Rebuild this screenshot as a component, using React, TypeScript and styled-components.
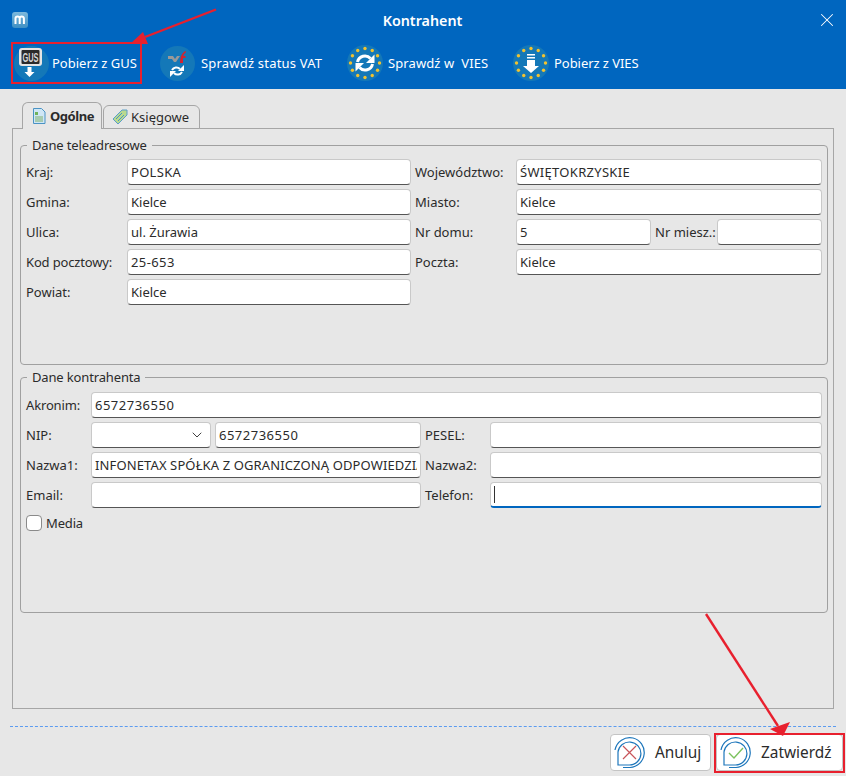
import React from 'react';
import styled, { createGlobalStyle } from 'styled-components';
import { ChevronDown, X } from 'lucide-react';

const GlobalStyle = createGlobalStyle`
  html, body {
    margin: 0;
    padding: 0;
    background: #e7e7e7;
  }
  * {
    box-sizing: border-box;
  }
`;

const Page = styled.div`
  position: relative;
  width: 846px;
  height: 776px;
  overflow: hidden;
  display: flex;
  flex-direction: column;
  background: #e7e7e7;
  color: #2b2b2b;
  font-family: "Noto Sans", "Open Sans", sans-serif;
  font-size: 13px;
`;

const Header = styled.header`
  height: 89px;
  flex: none;
  background: #0066bf;
  color: #fff;
`;

const TitleBar = styled.div`
  height: 40px;
  padding: 0 13px 0 12px;
  display: grid;
  grid-template-columns: 40px 1fr 40px;
  align-items: center;
`;

const Title = styled.div`
  text-align: center;
  font-weight: 600;
  font-size: 14.3px;
`;

const CloseWrap = styled.div`
  display: flex;
  justify-content: flex-end;
  margin-right: -5px;
`;

const Toolbar = styled.div`
  height: 49px;
  padding-left: 12px;
  display: flex;
  align-items: flex-start;
`;

const ToolItem = styled.div<{ $w: number; $after: number; $marked?: boolean; $iconGap: number }>`
  width: ${(p) => p.$w}px;
  height: 40px;
  margin: 3px ${(p) => p.$after}px 0 0;
  padding-left: 2px;
  display: flex;
  align-items: center;
  gap: ${(p) => p.$iconGap}px;
  white-space: nowrap;
  font-size: 13px;
  outline: ${(p) => (p.$marked ? '2px solid #e8202e' : 'none')};
  outline-offset: -1px;
`;

const ToolLabel = styled.span<{ $spacing?: number }>`
  letter-spacing: ${(p) => p.$spacing ?? 0}px;
`;

const Body = styled.main`
  flex: 1;
  display: flex;
  flex-direction: column;
  padding: 13px 12px 0;
`;

const TabRow = styled.div`
  display: flex;
  align-items: flex-start;
  padding-left: 10px;
  height: 27px;
  margin-bottom: -1px;
  gap: 1px;
`;

const Tab = styled.div<{ $active?: boolean }>`
  position: relative;
  z-index: 1;
  width: ${(p) => (p.$active ? 80 : 97)}px;
  height: ${(p) => (p.$active ? 27 : 24)}px;
  margin-top: ${(p) => (p.$active ? 0 : 3)}px;
  padding-left: ${(p) => (p.$active ? 9 : 8)}px;
  display: flex;
  align-items: center;
  gap: ${(p) => (p.$active ? 4 : 3)}px;
  background: #e7e7e7;
  border: 1px solid #a6a6a6;
  border-bottom: ${(p) => (p.$active ? 'none' : '1px solid #a6a6a6')};
  border-radius: 6px 6px 0 0;
  font-weight: ${(p) => (p.$active ? 700 : 400)};
  letter-spacing: ${(p) => (p.$active ? -0.45 : 0)}px;
`;

const Pane = styled.div`
  width: 822px;
  height: 581px;
  border: 1px solid #a6a6a6;
  padding: 8px 5px 0 7px;
  display: flex;
  flex-direction: column;
  gap: 4px;
`;

const Group = styled.fieldset<{ $h: number; $top: number }>`
  margin: 0;
  padding: ${(p) => p.$top}px 5px 0;
  min-width: 0;
  height: ${(p) => p.$h}px;
  border: 1px solid #a0a0a0;
  border-radius: 4px;
  display: flex;
  flex-direction: column;
  gap: 4px;
`;

const Legend = styled.legend`
  margin-left: 1px;
  padding: 0 5px;
  height: 16px;
  line-height: 16px;
  letter-spacing: -0.15px;
`;

const Row = styled.div`
  display: flex;
  align-items: center;
  gap: 4px;
  height: 26px;
`;

const Label = styled.label<{ $w: number }>`
  width: ${(p) => p.$w}px;
  flex: none;
  white-space: nowrap;
`;

const TightText = styled.span`
  letter-spacing: -0.15px;
`;

const fieldCss = `
  height: 26px;
  flex: none;
  background: #fff;
  border: 1px solid #c9c9c9;
  border-bottom: 1px solid #555;
  border-radius: 4px;
  padding: 0 3px;
  font: inherit;
  color: inherit;
  outline: none;
`;

const Field = styled.input<{ $w: number; $spacing?: number }>`
  ${fieldCss}
  width: ${(p) => p.$w}px;
  letter-spacing: ${(p) => p.$spacing ?? 0}px;
`;

const FocusedField = styled.div<{ $w: number }>`
  ${fieldCss}
  width: ${(p) => p.$w}px;
  border-bottom: 2px solid #0066bf;
  display: flex;
  align-items: center;
`;

const Caret = styled.span`
  width: 1px;
  height: 17px;
  background: #333;
`;

const Combo = styled.div<{ $w: number }>`
  ${fieldCss}
  width: ${(p) => p.$w}px;
  padding-right: 5px;
  display: flex;
  align-items: center;
  justify-content: flex-end;
`;

const CheckRow = styled.div`
  display: flex;
  align-items: center;
  gap: 4px;
  height: 26px;
  margin-top: -2px;
`;

const CheckBox = styled.span`
  width: 16px;
  height: 16px;
  background: #fff;
  border: 1px solid #8a8a8a;
  border-radius: 4px;
`;

const Footer = styled.footer`
  flex: 1;
  margin: 17px -2px 0;
  border-top: 1px dashed #5b9bf0;
  padding-top: 7px;
  display: flex;
  justify-content: flex-end;
  gap: 5px;
`;

const ButtonRow = styled.div`
  display: flex;
  gap: 5px;
  margin-right: -7px;
`;

const ActionButton = styled.div<{ $w: number; $marked?: boolean }>`
  position: relative;
  width: ${(p) => p.$w}px;
  height: 37px;
  background: #fff;
  border: 1px solid #c4c4c4;
  border-radius: 4px;
  display: flex;
  align-items: center;
  padding-left: 2px;
  gap: 9px;
  font-size: 15.4px;

  &::after {
    content: '';
    display: ${(p) => (p.$marked ? 'block' : 'none')};
    position: absolute;
    inset: -2px -3px -3px;
    border: 2px solid #e8202e;
  }
`;

const Overlay = styled.svg`
  position: absolute;
  left: 0;
  top: 0;
  pointer-events: none;
  z-index: 5;
`;

const AppLogo = () => (
  <svg width="16" height="16" viewBox="0 0 16 16">
    <defs>
      <linearGradient id="logoGrad" x1="0" y1="0" x2="0" y2="1">
        <stop offset="0" stopColor="#7db9dc" />
        <stop offset="1" stopColor="#3d8fc4" />
      </linearGradient>
    </defs>
    <rect width="16" height="16" rx="3" fill="url(#logoGrad)" />
    <path d="M3.5 12V6.5a2 2 0 0 1 4.200 0V12M7.700 6.500a2 2 0 0 1 4.200 0V12" fill="none" stroke="#fff" strokeWidth="2" />
  </svg>
);

const RefreshArrows = ({ cx, cy, r, w }: { cx: number; cy: number; r: number; w: number }) => (
  <g fill="none" stroke="#fff" strokeWidth={w}>
    <path d={`M${cx - r} ${cy - 1}A${r} ${r} 0 0 1 ${cx + r - 2} ${cy - r + 3}`} />
    <path d={`M${cx + r} ${cy + 1}A${r} ${r} 0 0 1 ${cx - r + 2} ${cy + r - 3}`} />
    <path d={`M${cx + r + 2} ${cy - r - 1}v${r + 1}h${-r - 1}z`} fill="#fff" stroke="none" />
    <path d={`M${cx - r - 2} ${cy + r + 1}v${-r - 1}h${r + 1}z`} fill="#fff" stroke="none" />
  </g>
);

const GusIcon = () => (
  <svg width="35" height="35" viewBox="0 0 35 35">
    <circle cx="17.500" cy="17.500" r="17.500" fill="#1478b8" />
    <rect x="5" y="2" width="23" height="18" rx="3" fill="#e4e4e4" />
    <rect x="7.500" y="4" width="18" height="14" rx="1" fill="#2a2a2a" />
    <text x="16.500" y="15.500" textAnchor="middle" fontSize="12" fontWeight="700" fill="#d8d8d8" fontFamily="Liberation Sans" textLength="16" lengthAdjust="spacingAndGlyphs">GUS</text>
    <path d="M13.500 21h4v5h3l-5 5-5-5h3z" fill="#fff" />
  </svg>
);

const VatIcon = () => (
  <svg width="35" height="35" viewBox="0 0 35 35">
    <circle cx="17.500" cy="17.500" r="17.500" fill="#1478b8" />
    <path d="M8 10h5l2 3 2-3h3l-4 6h-2l-2-3H8z" fill="#999" />
    <path d="M20 17c0-6 2-11 6-12l-.5 2c-1.500.5-2 2-2.200 3h2.200v2h-2.500v5z" fill="#d5232f" />
    <RefreshArrows cx={17} cy={25} r={5} w={2} />
  </svg>
);

const StarRing = () => (
  <g fill="#f2c230">
    {Array.from({ length: 12 }, (_, i) => {
      const a = (i * Math.PI) / 6;
      return <circle key={i} cx={18 + 14.500 * Math.sin(a)} cy={18 - 14.500 * Math.cos(a)} r="1.700" />;
    })}
  </g>
);

const ViesSyncIcon = () => (
  <svg width="36" height="36" viewBox="0 0 36 36">
    <circle cx="18" cy="18" r="18" fill="#1478b8" />
    <StarRing />
    <RefreshArrows cx={18} cy={18} r={7.500} w={3} />
  </svg>
);

const ViesDownIcon = () => (
  <svg width="36" height="36" viewBox="0 0 36 36">
    <circle cx="18" cy="18" r="18" fill="#1478b8" />
    <StarRing />
    <path d="M14 9h8v1.500h-8zM14 12h8v1.500h-8z" fill="#fff" />
    <path d="M14 15h8v6h4l-8 7-8-7h4z" fill="#fff" />
  </svg>
);

const DocTabIcon = () => (
  <svg width="14" height="16" viewBox="0 0 14 16">
    <path d="M1.500.5h8l3.500 3.500v11.500h-11.500z" fill="#cfe6f5" stroke="#4a93c4" />
    <rect x="3" y="4" width="3" height="3" fill="#6fb25a" />
    <path d="M3 9h8M3 11h8M3 13h8" stroke="#7fb06a" />
  </svg>
);

const TagTabIcon = () => (
  <svg width="16" height="16" viewBox="0 0 16 16">
    <path d="M1 10L10 1h5v5l-9 9z" fill="#b9d98f" stroke="#5a9ec9" />
    <path d="M4 10l6-6M6 12l6-6" stroke="#4a93c4" />
  </svg>
);

const BubbleIcon = ({ children }: { children: React.ReactNode }) => (
  <svg width="33" height="33" viewBox="0 0 33 33">
    <path d="M5 29V16a11.500 11.500 0 1 1 11.500 13z" fill="#fff" stroke="#1d76bb" strokeWidth="1.200" />
    <path d="M10 31.500h7a15 15 0 0 0 3-29.500A15 15 0 0 0 2 14" fill="none" stroke="#1d76bb" strokeWidth="1.200" />
    {children}
  </svg>
);

const Arrow = ({ x1, y1, x2, y2, head }: { x1: number; y1: number; x2: number; y2: number; head: string }) => (
  <g>
    <line x1={x1} y1={y1} x2={x2} y2={y2} stroke="#e8202e" strokeWidth="2.400" />
    <polygon points={head} fill="#e8202e" />
  </g>
);

export default function App() {
  return (
    <Page>
      <GlobalStyle />
      <Header>
        <TitleBar>
          <AppLogo />
          <Title>Kontrahent</Title>
          <CloseWrap>
            <X size={22} strokeWidth={1.1} color="#fff" />
          </CloseWrap>
        </TitleBar>
        <Toolbar>
          <ToolItem $w={129} $after={17} $iconGap={3} $marked>
            <GusIcon />
            <ToolLabel>Pobierz z GUS</ToolLabel>
          </ToolItem>
          <ToolItem $w={187} $after={0} $iconGap={6}>
            <VatIcon />
            <ToolLabel $spacing={0.2}>Sprawdź status VAT</ToolLabel>
          </ToolItem>
          <ToolItem $w={166} $after={0} $iconGap={5}>
            <ViesSyncIcon />
            <ToolLabel $spacing={0.1}>Sprawdź w&nbsp; VIES</ToolLabel>
          </ToolItem>
          <ToolItem $w={140} $after={0} $iconGap={5}>
            <ViesDownIcon />
            <ToolLabel $spacing={-0.05}>Pobierz z VIES</ToolLabel>
          </ToolItem>
        </Toolbar>
      </Header>
      <Body>
        <TabRow>
          <Tab $active>
            <DocTabIcon />
            Ogólne
          </Tab>
          <Tab>
            <TagTabIcon />
            Księgowe
          </Tab>
        </TabRow>
        <Pane>
          <Group $h={228} $top={6}>
            <Legend>Dane teleadresowe</Legend>
            <Row>
              <Label $w={97}>Kraj:</Label>
              <Field $w={284} $spacing={0.3} readOnly value="POLSKA" />
              <Label $w={97}>Województwo:</Label>
              <Field $w={306} $spacing={0.3} readOnly value="ŚWIĘTOKRZYSKIE" />
            </Row>
            <Row>
              <Label $w={97}>Gmina:</Label>
              <Field $w={284} readOnly value="Kielce" />
              <Label $w={97}>Miasto:</Label>
              <Field $w={306} readOnly value="Kielce" />
            </Row>
            <Row>
              <Label $w={97}>Ulica:</Label>
              <Field $w={284} readOnly value="ul. Żurawia" />
              <Label $w={97}>Nr domu:</Label>
              <Field $w={135} readOnly value="5" />
              <Label $w={58}>Nr miesz.:</Label>
              <Field $w={105} readOnly value="" />
            </Row>
            <Row>
              <Label $w={97}>
                <TightText>Kod pocztowy:</TightText>
              </Label>
              <Field $w={284} $spacing={0.4} readOnly value="25-653" />
              <Label $w={97}>Poczta:</Label>
              <Field $w={306} readOnly value="Kielce" />
            </Row>
            <Row>
              <Label $w={97}>Powiat:</Label>
              <Field $w={284} readOnly value="Kielce" />
            </Row>
          </Group>
          <Group $h={244} $top={7}>
            <Legend>Dane kontrahenta</Legend>
            <Row>
              <Label $w={61}>
                <TightText>Akronim:</TightText>
              </Label>
              <Field $w={731} $spacing={0.5} readOnly value="6572736550" />
            </Row>
            <Row>
              <Label $w={61}>NIP:</Label>
              <Combo $w={120}>
                <ChevronDown size={16} strokeWidth={1.4} color="#333" />
              </Combo>
              <Field $w={206} $spacing={0.5} readOnly value="6572736550" />
              <Label $w={61}>PESEL:</Label>
              <Field $w={332} readOnly value="" />
            </Row>
            <Row>
              <Label $w={61}>Nazwa1:</Label>
              <Field $w={330} $spacing={0.12} readOnly value="INFONETAX SPÓŁKA Z OGRANICZONĄ ODPOWIEDZIALNOŚCIĄ" />
              <Label $w={61}>Nazwa2:</Label>
              <Field $w={332} readOnly value="" />
            </Row>
            <Row>
              <Label $w={61}>Email:</Label>
              <Field $w={330} readOnly value="" />
              <Label $w={61}>Telefon:</Label>
              <FocusedField $w={332}>
                <Caret />
              </FocusedField>
            </Row>
            <CheckRow>
              <CheckBox />
              <TightText>Media</TightText>
            </CheckRow>
          </Group>
        </Pane>
        <Footer>
          <ButtonRow>
            <ActionButton $w={101}>
              <BubbleIcon>
                <path d="M10 10l13 13M23 10L10 23" stroke="#c8545a" strokeWidth="1.200" />
              </BubbleIcon>
              Anuluj
            </ActionButton>
            <ActionButton $w={127} $marked>
              <BubbleIcon>
                <path d="M10 17l5 5 9-10" fill="none" stroke="#7cc25e" strokeWidth="1.400" />
              </BubbleIcon>
              Zatwierdź
            </ActionButton>
          </ButtonRow>
        </Footer>
      </Body>
      <Overlay width="846" height="776" viewBox="0 0 846 776">
        <Arrow x1={216} y1={9.500} x2={145} y2={37} head="130,44 143,32 148,44" />
        <Arrow x1={706} y1={614} x2={778} y2={726} head="783,736 770,729 790,722" />
      </Overlay>
    </Page>
  );
}
